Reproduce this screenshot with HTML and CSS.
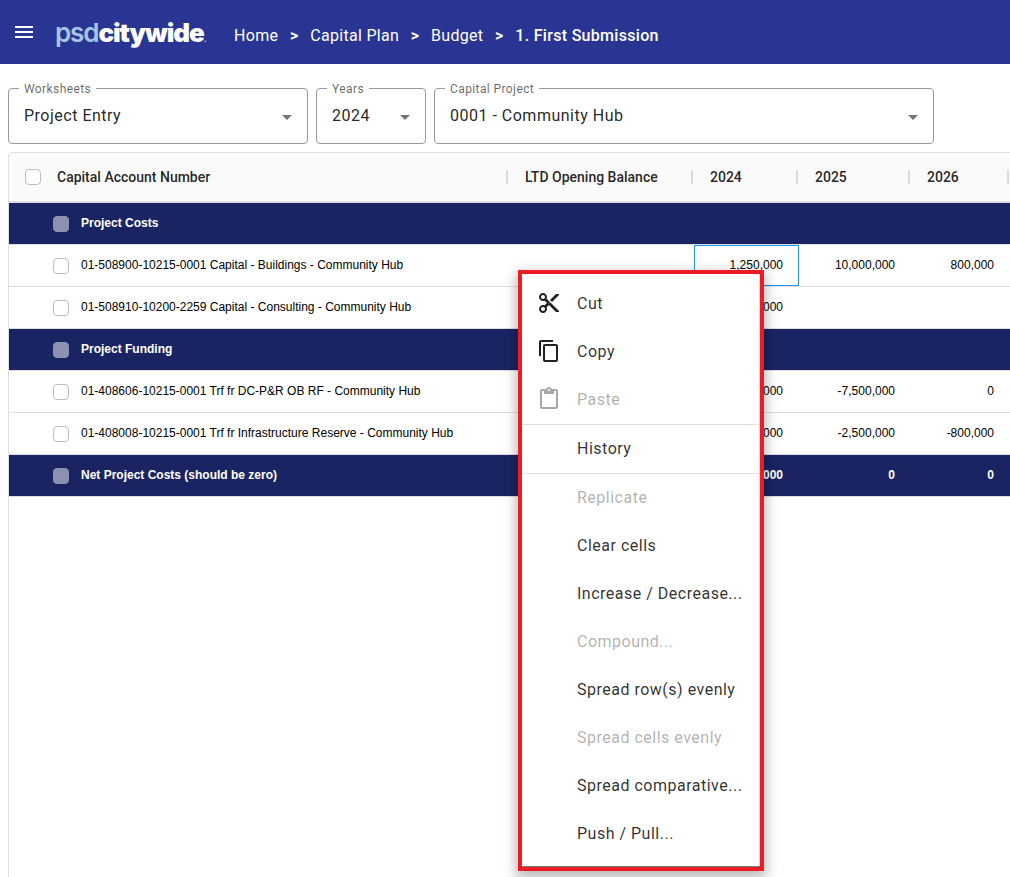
FILE: index.html
```html
<!DOCTYPE html>
<html lang="en">
<head>
<meta charset="utf-8">
<title>Budget</title>
<link rel="stylesheet" href="styles.css">
</head>
<body>
<header class="appbar">
  <svg class="burger" viewBox="0 0 24 24" width="24" height="24"><path d="M3 18h18v-2H3v2zm0-5h18v-2H3v2zm0-7v2h18V6H3z"/></svg>
  <div class="logo"><span class="logo-light">psd</span><span class="logo-bold">citywide</span><span class="logo-dot">.</span></div>
  <nav class="crumbs">
    <span>Home</span><b class="sep">&gt;</b><span>Capital Plan</span><b class="sep">&gt;</b><span>Budget</span><b class="sep">&gt;</b><span class="current">1. First Submission</span>
  </nav>
</header>

<section class="filters">
  <div class="field f-work"><span class="legend">Worksheets</span><span class="value">Project Entry</span><i class="caret"></i></div>
  <div class="field f-year"><span class="legend">Years</span><span class="value">2024</span><i class="caret"></i></div>
  <div class="field f-proj"><span class="legend">Capital Project</span><span class="value">0001 - Community Hub</span><i class="caret"></i></div>
</section>

<section class="grid">
  <div class="row head">
    <div class="c acct"><i class="box head-box"></i><span>Capital Account Number</span></div>
    <div class="c ltd"><span>LTD Opening Balance</span></div>
    <div class="c y24"><span>2024</span></div>
    <div class="c y25"><span>2025</span></div>
    <div class="c y26"><span>2026</span></div>
    <div class="c y27"></div>
  </div>
  <div class="row group">
    <div class="c acct"><i class="box"></i><span>Project Costs</span></div>
    <div class="c ltd"></div><div class="c y24"></div><div class="c y25"></div><div class="c y26"></div>
  </div>
  <div class="row">
    <div class="c acct"><i class="box"></i><span>01-508900-10215-0001 Capital - Buildings - Community Hub</span></div>
    <div class="c ltd"></div>
    <div class="c y24 num selected"><span>1,250,000</span></div><div class="c y25 num"><span>10,000,000</span></div><div class="c y26 num"><span>800,000</span></div>
  </div>
  <div class="row">
    <div class="c acct"><i class="box"></i><span>01-508910-10200-2259 Capital - Consulting - Community Hub</span></div>
    <div class="c ltd"></div>
    <div class="c y24 num"><span>250,000</span></div><div class="c y25 num"></div><div class="c y26 num"></div>
  </div>
  <div class="row group">
    <div class="c acct"><i class="box"></i><span>Project Funding</span></div>
    <div class="c ltd"></div><div class="c y24"></div><div class="c y25"></div><div class="c y26"></div>
  </div>
  <div class="row">
    <div class="c acct"><i class="box"></i><span>01-408606-10215-0001 Trf fr DC-P&amp;R OB RF - Community Hub</span></div>
    <div class="c ltd"></div>
    <div class="c y24 num"><span>-1,000,000</span></div><div class="c y25 num"><span>-7,500,000</span></div><div class="c y26 num"><span>0</span></div>
  </div>
  <div class="row">
    <div class="c acct"><i class="box"></i><span>01-408008-10215-0001 Trf fr Infrastructure Reserve - Community Hub</span></div>
    <div class="c ltd"></div>
    <div class="c y24 num"><span>-500,000</span></div><div class="c y25 num"><span>-2,500,000</span></div><div class="c y26 num"><span>-800,000</span></div>
  </div>
  <div class="row group">
    <div class="c acct"><i class="box"></i><span>Net Project Costs (should be zero)</span></div>
    <div class="c ltd"></div>
    <div class="c y24 num"><span>0,000</span></div><div class="c y25 num"><span>0</span></div><div class="c y26 num"><span>0</span></div>
  </div>
</section>

<div class="menu">
  <div class="item"><svg class="ico" viewBox="0 0 24 24" width="24" height="24"><path d="M9.64 7.64c.23-.5.36-1.05.36-1.64 0-2.21-1.79-4-4-4S2 3.79 2 6s1.79 4 4 4c.59 0 1.14-.13 1.64-.36L10 12l-2.36 2.36C7.14 14.13 6.59 14 6 14c-2.21 0-4 1.79-4 4s1.79 4 4 4 4-1.79 4-4c0-.59-.13-1.14-.36-1.64L12 14l7 7h3v-1L9.64 7.64zM6 8c-1.1 0-2-.89-2-2s.9-2 2-2 2 .89 2 2-.9 2-2 2zm0 12c-1.1 0-2-.89-2-2s.9-2 2-2 2 .89 2 2-.9 2-2 2zm6-7.5c-.28 0-.5-.22-.5-.5s.22-.5.5-.5.5.22.5.5-.22.5-.5.5zM19 3l-6 6 2 2 7-7V3z"/></svg><span>Cut</span></div>
  <div class="item"><svg class="ico" viewBox="0 0 24 24" width="24" height="24"><path d="M16 1H4c-1.1 0-2 .9-2 2v14h2V3h12V1zm3 4H8c-1.1 0-2 .9-2 2v14c0 1.1.9 2 2 2h11c1.1 0 2-.9 2-2V7c0-1.1-.9-2-2-2zm0 16H8V7h11v14z"/></svg><span>Copy</span></div>
  <div class="item off"><svg class="ico" viewBox="0 0 24 24" width="24" height="24"><path d="M19 2h-4.18C14.4.84 13.3 0 12 0c-1.3 0-2.4.84-2.82 2H5c-1.1 0-2 .9-2 2v16c0 1.1.9 2 2 2h14c1.1 0 2-.9 2-2V4c0-1.1-.9-2-2-2zm-7 0c.55 0 1 .45 1 1s-.45 1-1 1-1-.45-1-1 .45-1 1-1zm7 18H5V4h2v3h10V4h2v16z"/></svg><span>Paste</span></div>
  <hr class="rule">
  <div class="item"><span class="text-only">History</span></div>
  <hr class="rule">
  <div class="item off"><span class="text-only">Replicate</span></div>
  <div class="item"><span class="text-only">Clear cells</span></div>
  <div class="item"><span class="text-only">Increase / Decrease...</span></div>
  <div class="item off"><span class="text-only">Compound...</span></div>
  <div class="item"><span class="text-only">Spread row(s) evenly</span></div>
  <div class="item off"><span class="text-only">Spread cells evenly</span></div>
  <div class="item"><span class="text-only">Spread comparative...</span></div>
  <div class="item"><span class="text-only">Push / Pull...</span></div>
</div>
</body>
</html>
```
FILE: styles.css
```css
* { box-sizing: border-box; }
html, body { margin: 0; height: 877px; overflow: hidden; }
body { position: relative; background: #fff; font-family: Roboto, sans-serif; color: rgba(0,0,0,.87); }

.appbar { height: 64px; background: #2a3593; color: #fff; display: flex; align-items: center; padding-left: 12px; }
.burger { fill: #fff; flex: none; }
.logo { margin-left: 19px; font-family: Inter, "Liberation Sans", sans-serif; font-size: 26px; line-height: 30px; letter-spacing: -1.1px; width: 179px; flex: none; margin-top: 7px; white-space: nowrap; }
.logo-light { color: #a5c5e4; font-weight: 600; }
.logo-bold { color: #fff; font-weight: 900; }
.logo-dot { color: #a5c5e4; font-size: 12px; }
.crumbs { display: flex; align-items: center; font-size: 16px; letter-spacing: .3px; margin-top: 6px; }
.sep { font-weight: 700; margin: 0 11.7px; font-family: Roboto, sans-serif; }
.current { font-weight: 500; }

.filters { display: flex; gap: 8px; padding: 24px 8px 8px; }
.field { position: relative; height: 56px; border: 1px solid #9b9b9b; border-radius: 4px; display: flex; align-items: center; padding-left: 15px; font-size: 16px; letter-spacing: .5px; }
.value { margin-bottom: 2px; }
.f-work { width: 300px; }
.f-year { width: 110px; }
.f-proj { width: 500px; }
.legend { position: absolute; left: 10px; top: -7px; padding: 0 5px; background: #fff; font-size: 12px; line-height: 14px; letter-spacing: .4px; color: rgba(0,0,0,.6); }
.caret { position: absolute; right: 15px; top: 26px; border-left: 5px solid transparent; border-right: 5px solid transparent; border-top: 5px solid #757575; }

.grid { margin-left: 8px; width: 1002px; overflow: hidden; border: 1px solid #e0e0e0; border-width: 1px 0 0 1px; border-radius: 4px 0 0 0; height: 725px; }
.row { display: flex; height: 42px; width: 1100px; border-bottom: 1px solid #dedede; font-family: "Liberation Sans", sans-serif; font-size: 12px; color: #000; }
.c { display: flex; align-items: center; flex: none; height: 100%; position: relative; }
.c span { margin-bottom: 2px; }
.acct { width: 499px; padding-left: 44px; }
.ltd { width: 185px; }
.y24 { width: 105px; }
.y25 { width: 112px; }
.y26 { width: 99px; }
.y27 { width: 100px; }
.box { width: 16px; height: 16px; border: 1px solid #bdbdc4; border-radius: 4px; background: #fff; margin-right: 12px; flex: none; }
.head { height: 50px; background: #fafafa; border-bottom: 2px solid #dedede; font-family: Roboto, sans-serif; font-size: 14px; font-weight: 500; color: rgba(0,0,0,.87); }
.head .c span { margin-bottom: 0; }
.head .acct { padding-left: 16px; }
.head .box { margin-right: 16px; }
.head .c:not(.y27)::after { content: ""; position: absolute; right: 0; top: 17px; height: 14px; width: 2px; background: #dcdcdc; }
.head .ltd, .head .y24, .head .y25, .head .y26 { padding-left: 17px; }
.group { background: #1b2463; color: #fff; font-weight: 700; }
.group .box { background: #8d91b1; border-color: #8d91b1; }
.num { justify-content: flex-end; padding-right: 15px; }
.selected::after { content: ""; position: absolute; left: 1px; right: -1px; top: 0; bottom: 0; border: 1px solid #2196f3; }

.menu { position: absolute; left: 518px; top: 270px; width: 246px; height: 601px; background: #fff; border: 4px solid #ed1c24; padding-top: 5px; box-shadow: 0 5px 12px 2px rgba(0,0,0,.28), inset 0 -1px 0 #777, inset -1px 0 0 #ddd; font-size: 16px; letter-spacing: .5px; color: rgba(0,0,0,.82); }
.item { height: 48px; display: flex; align-items: center; padding-left: 15px; }
.ico { fill: #212121; margin-right: 16px; flex: none; }
.text-only { margin-left: 40px; }
.off { color: rgba(0,0,0,.32); }
.off .ico { fill: rgba(0,0,0,.34); }
.rule { margin: 1px 0 -1px; border: 0; border-top: 1px solid #e0e0e0; height: 1px; }
```
